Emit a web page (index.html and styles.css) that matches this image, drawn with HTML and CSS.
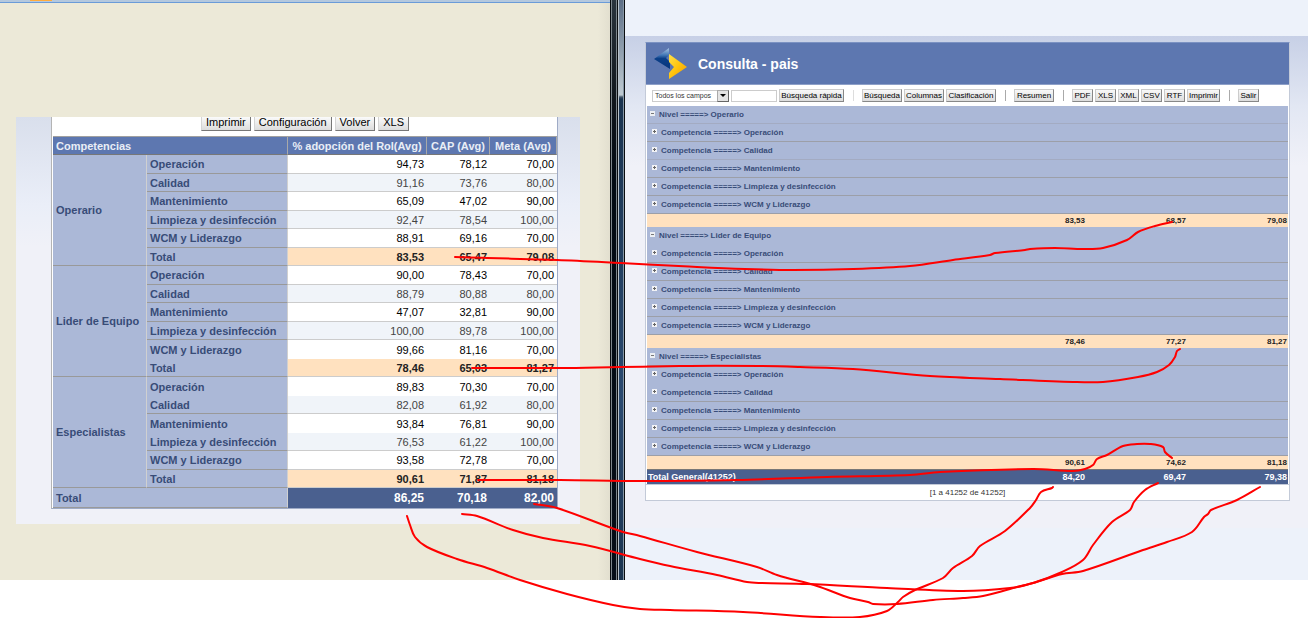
FILE: index.html
```html
<!DOCTYPE html>
<html lang="es">
<head>
<meta charset="utf-8">
<title>Consulta - pais</title>
<link rel="stylesheet" href="styles.css">
</head>
<body>
<main class="compare">
  <section class="pane pane-left">
    <div class="tabstrip"><span class="tab-mark"></span></div>
    <div class="summary-wrap">
      <div class="summary">
        <div class="summary-actions">
          <button class="btn" type="button">Imprimir</button>
          <button class="btn" type="button">Configuración</button>
          <button class="btn" type="button">Volver</button>
          <button class="btn" type="button">XLS</button>
        </div>
        <table class="pivot">
          <colgroup><col class="c-level"><col class="c-skill"><col class="c-role"><col class="c-cap"><col class="c-meta"></colgroup>
          <thead>
            <tr><th class="head-first" colspan="2" scope="col">Competencias</th><th scope="col">% adopción del Rol(Avg)</th><th scope="col">CAP (Avg)</th><th scope="col">Meta (Avg)</th></tr>
          </thead>
          <tbody>
            <tr><th class="level" rowspan="6" scope="rowgroup">Operario</th><th scope="row">Operación</th><td>94,73</td><td>78,12</td><td>70,00</td></tr>
            <tr class="alt"><th scope="row">Calidad</th><td>91,16</td><td>73,76</td><td>80,00</td></tr>
            <tr><th scope="row">Mantenimiento</th><td>65,09</td><td>47,02</td><td>90,00</td></tr>
            <tr class="alt"><th scope="row">Limpieza y desinfección</th><td>92,47</td><td>78,54</td><td>100,00</td></tr>
            <tr><th scope="row">WCM y Liderazgo</th><td>88,91</td><td>69,16</td><td>70,00</td></tr>
            <tr class="subtotal"><th scope="row">Total</th><td>83,53</td><td>65,47</td><td>79,08</td></tr>
          </tbody>
          <tbody>
            <tr><th class="level" rowspan="6" scope="rowgroup">Lider de Equipo</th><th scope="row">Operación</th><td>90,00</td><td>78,43</td><td>70,00</td></tr>
            <tr class="alt"><th scope="row">Calidad</th><td>88,79</td><td>80,88</td><td>80,00</td></tr>
            <tr><th scope="row">Mantenimiento</th><td>47,07</td><td>32,81</td><td>90,00</td></tr>
            <tr class="alt"><th scope="row">Limpieza y desinfección</th><td>100,00</td><td>89,78</td><td>100,00</td></tr>
            <tr class="joined"><th scope="row">WCM y Liderazgo</th><td>99,66</td><td>81,16</td><td>70,00</td></tr>
            <tr class="subtotal"><th scope="row">Total</th><td>78,46</td><td>65,03</td><td>81,27</td></tr>
          </tbody>
          <tbody>
            <tr class="joined"><th class="level" rowspan="6" scope="rowgroup">Especialistas</th><th scope="row">Operación</th><td>89,83</td><td>70,30</td><td>70,00</td></tr>
            <tr class="alt"><th scope="row">Calidad</th><td>82,08</td><td>61,92</td><td>80,00</td></tr>
            <tr class="joined"><th scope="row">Mantenimiento</th><td>93,84</td><td>76,81</td><td>90,00</td></tr>
            <tr class="alt"><th scope="row">Limpieza y desinfección</th><td>76,53</td><td>61,22</td><td>100,00</td></tr>
            <tr><th scope="row">WCM y Liderazgo</th><td>93,58</td><td>72,78</td><td>70,00</td></tr>
            <tr class="subtotal"><th scope="row">Total</th><td>90,61</td><td>71,87</td><td>81,18</td></tr>
          </tbody>
          <tfoot>
            <tr><th colspan="2" scope="row">Total</th><td>86,25</td><td>70,18</td><td>82,00</td></tr>
          </tfoot>
        </table>
      </div>
    </div>
  </section>

  <div class="frame-edge"><i class="edge-dark"></i><i class="edge-blue"></i></div>

  <section class="pane pane-right">
    <div class="backdrop">
      <div class="query">
        <header class="query-head">
          <svg class="logo" viewBox="0 0 33 32" aria-hidden="true">
            <defs>
              <linearGradient id="lb" x1="0" y1="0" x2="0" y2="1"><stop offset="0" stop-color="#a9c6e4"/><stop offset=".35" stop-color="#3f74b4"/><stop offset=".5" stop-color="#0b3f88"/><stop offset="1" stop-color="#06357c"/></linearGradient>
              <linearGradient id="ly" x1="0" y1="0" x2="1" y2="1"><stop offset="0" stop-color="#ffe14a"/><stop offset=".5" stop-color="#ffc30c"/><stop offset="1" stop-color="#f29a00"/></linearGradient>
            </defs>
            <path d="M15 0V7L12 10L16 14V21L0 11Z" fill="url(#lb)"/>
            <path d="M15 6L33 19L15 31V25L20 19L15 14Z" fill="url(#ly)"/>
          </svg>
          <h1>Consulta - pais</h1>
        </header>
        <div class="toolbar">
          <label class="picker"><select aria-label="Campo"><option>Todos los campos</option></select><span class="picker-arrow"></span></label>
          <input class="quick" type="text" aria-label="Búsqueda rápida">
          <button class="tool w-quick" type="button">Búsqueda rápida</button>
          <span class="sep sep-light"></span>
          <button class="tool w-med" type="button">Búsqueda</button>
          <button class="tool w-med" type="button">Columnas</button>
          <button class="tool w-wide" type="button">Clasificación</button>
          <span class="sep"></span>
          <button class="tool w-med" type="button">Resumen</button>
          <span class="sep"></span>
          <button class="tool w-tiny" type="button">PDF</button>
          <button class="tool w-tiny" type="button">XLS</button>
          <button class="tool w-tiny" type="button">XML</button>
          <button class="tool w-tiny" type="button">CSV</button>
          <button class="tool w-tiny" type="button">RTF</button>
          <button class="tool w-print" type="button">Imprimir</button>
          <span class="sep"></span>
          <button class="tool w-tiny" type="button">Salir</button>
        </div>
        <table class="groups">
          <colgroup><col><col class="g-wide"><col class="g-wide"></colgroup>
          <tbody>
            <tr class="soft"><th colspan="3" scope="rowgroup"><button class="fold minus" type="button" aria-label="Contraer"></button>Nivel =====&gt; Operario</th></tr>
            <tr class="sub"><th colspan="3"><button class="fold plus" type="button" aria-label="Expandir"></button>Competencia =====&gt; Operación</th></tr>
            <tr class="sub soft"><th colspan="3"><button class="fold plus" type="button" aria-label="Expandir"></button>Competencia =====&gt; Calidad</th></tr>
            <tr class="sub"><th colspan="3"><button class="fold plus" type="button" aria-label="Expandir"></button>Competencia =====&gt; Mantenimiento</th></tr>
            <tr class="sub"><th colspan="3"><button class="fold plus" type="button" aria-label="Expandir"></button>Competencia =====&gt; Limpieza y desinfección</th></tr>
            <tr class="sub"><th colspan="3"><button class="fold plus" type="button" aria-label="Expandir"></button>Competencia =====&gt; WCM y Liderazgo</th></tr>
            <tr class="sum"><td>83,53</td><td>68,57</td><td>79,08</td></tr>
          </tbody>
          <tbody>
            <tr class="none"><th colspan="3" scope="rowgroup"><button class="fold minus" type="button" aria-label="Contraer"></button>Nivel =====&gt; Lider de Equipo</th></tr>
            <tr class="sub"><th colspan="3"><button class="fold plus" type="button" aria-label="Expandir"></button>Competencia =====&gt; Operación</th></tr>
            <tr class="sub"><th colspan="3"><button class="fold plus" type="button" aria-label="Expandir"></button>Competencia =====&gt; Calidad</th></tr>
            <tr class="sub"><th colspan="3"><button class="fold plus" type="button" aria-label="Expandir"></button>Competencia =====&gt; Mantenimiento</th></tr>
            <tr class="sub"><th colspan="3"><button class="fold plus" type="button" aria-label="Expandir"></button>Competencia =====&gt; Limpieza y desinfección</th></tr>
            <tr class="sub"><th colspan="3"><button class="fold plus" type="button" aria-label="Expandir"></button>Competencia =====&gt; WCM y Liderazgo</th></tr>
            <tr class="sum"><td>78,46</td><td>77,27</td><td>81,27</td></tr>
          </tbody>
          <tbody>
            <tr><th colspan="3" scope="rowgroup"><button class="fold minus" type="button" aria-label="Contraer"></button>Nivel =====&gt; Especialistas</th></tr>
            <tr class="sub none"><th colspan="3"><button class="fold plus" type="button" aria-label="Expandir"></button>Competencia =====&gt; Operación</th></tr>
            <tr class="sub"><th colspan="3"><button class="fold plus" type="button" aria-label="Expandir"></button>Competencia =====&gt; Calidad</th></tr>
            <tr class="sub"><th colspan="3"><button class="fold plus" type="button" aria-label="Expandir"></button>Competencia =====&gt; Mantenimiento</th></tr>
            <tr class="sub"><th colspan="3"><button class="fold plus" type="button" aria-label="Expandir"></button>Competencia =====&gt; Limpieza y desinfección</th></tr>
            <tr class="sub"><th colspan="3"><button class="fold plus" type="button" aria-label="Expandir"></button>Competencia =====&gt; WCM y Liderazgo</th></tr>
            <tr class="sum"><td>90,61</td><td>74,62</td><td>81,18</td></tr>
          </tbody>
          <tfoot>
            <tr><td><span class="grand"><b>Total General(41252)</b><span>84,20</span></span></td><td>69,47</td><td>79,38</td></tr>
          </tfoot>
        </table>
        <footer class="pager">[1 a 41252 de 41252]</footer>
      </div>
    </div>
  </section>

  <svg class="marks" viewBox="0 0 1308 618" aria-hidden="true"></svg>
</main>
<script src="marks.js"></script>
</body>
</html>
```

FILE: styles.css
```css
* { box-sizing: border-box; }

body {
  margin: 0;
  background: #fff;
  font-family: "Liberation Sans", Arial, sans-serif;
}

.compare {
  position: relative;
  display: grid;
  grid-template-columns: 610fr 15px 683fr;
  padding-bottom: 38px;
}

.pane { min-height: 580px; min-width: 0; }

.marks {
  position: absolute;
  top: 0;
  left: 0;
  width: 100%;
  pointer-events: none;
}

.marks path {
  fill: none;
  stroke: #f00;
  stroke-width: 2;
  stroke-linecap: round;
  stroke-linejoin: round;
}

/* Left window */

.pane-left { background: linear-gradient(to right, #ece9d8 98%, #e2dfcf); }

.tabstrip {
  height: 3px;
  background: #b4c8de;
  border-bottom: 1px solid #6a9bd8;
}

.tab-mark {
  display: block;
  width: 22px;
  height: 1px;
  margin-left: 30px;
  background: #ffab3c;
}

.summary-wrap {
  margin: 114px 30px 0 16px;
  padding: 0 22px 15px 35px;
  background: linear-gradient(#d9dfec, #eaeef8 88px, #f0f1f8 130px);
}

.summary {
  padding-left: 1px;
  background: #fff;
  border-left: 1px solid #b4b4b4;
  border-right: 1px solid #9fabc6;
  border-bottom: 1px solid #9fabc6;
}

.summary-actions {
  display: flex;
  justify-content: center;
  gap: 3px;
  height: 19px;
  align-items: flex-start;
}

.btn {
  height: 14px;
  padding: 0 4px 3px;
  border: 1px solid #d4d4d4;
  border-top: 0;
  border-right: 1px solid #777;
  border-bottom: 1px solid #777;
  background: linear-gradient(#fafafa, #dcdcdc);
  color: #000;
  font: 11px/10px "Liberation Sans", Arial, sans-serif;
}

.pivot {
  width: 100%;
  border-collapse: separate;
  border-spacing: 0;
  table-layout: fixed;
  border-top: 1px solid #a0a0a0;
}

.c-level { width: 94px; }
.c-skill { width: 141px; }
.c-cap { width: 63px; }
.c-meta { width: 67px; }

.pivot th,
.pivot td {
  height: 18px;
  padding: 0 3px;
  font-size: 11px;
  line-height: 16px;
  white-space: nowrap;
  overflow: hidden;
}

.pivot tbody tr:nth-child(odd) th,
.pivot tbody tr:nth-child(odd) td { height: 19px; }

.pivot thead th {
  background: #5d77b0;
  color: #e9eef6;
  text-align: center;
  border-right: 1px solid #a9a9a9;
  border-bottom: 1px solid #777;
}

.pivot thead .head-first { text-align: left; }

.pivot tbody th,
.pivot tfoot th {
  background: #abb8d7;
  color: #384c77;
  text-align: left;
  border-right: 1px solid #d0d0d0;
  border-bottom: 1px solid #999;
}

.pivot td {
  background: #fff;
  color: #000;
  text-align: right;
  border-bottom: 1px solid #ccc;
}

.pivot .alt td { background: #f0f4f9; color: #444; }
.pivot .subtotal td { background: #ffe1bf; color: #222; font-weight: bold; }
.pivot .joined th:not(.level),
.pivot .joined td { border-bottom: 0; }

.pivot tfoot th { height: 20px; }
.pivot tfoot td {
  height: 20px;
  background: #4a608f;
  border-bottom-color: #4a608f;
  color: #fff;
  font-size: 12px;
  font-weight: bold;
}

/* Window border between the panes */

.frame-edge {
  display: grid;
  grid-template-columns: 4px 5px;
  padding: 0 2px 0 2px;
  column-gap: 3px;
  background: linear-gradient(to right, #0a0d10 1px, #7d868c 1px 2px, #0a0d10 2px 6px, #7d868c 6px 7px, #0a0d10 7px 8px, #b8c2ca 8px 9px, #244263 9px 13px, #8797a5 13px 14px, #0a0d10 14px);
}

.edge-dark { background: linear-gradient(#2a343d, #10161c 100px, #020a12 180px, #050d17); }
.edge-blue { width: 4px; background: linear-gradient(#5d6f86, #bfcad2 95px, #44576a 97px, #1b3450 99px, #2b4a70 400px, #1b3450); }

/* Right window */

.pane-right { padding-top: 36px; background: #edf2fa; }

.backdrop {
  padding: 6px 18px 27px 20px;
  background: linear-gradient(#c7d0e6, #e2e7f3 70px, #f0f1f8 130px);
}

.query {
  border: 1px solid #c3cad8;
  border-top-color: #7b92c2;
  background: #fff;
}

.query-head {
  display: flex;
  align-items: center;
  gap: 11px;
  height: 42px;
  padding-left: 8px;
  background: #5d77b0;
  border-bottom: 1px solid #8ea0c8;
}

.logo { width: 33px; height: 32px; }

.query-head h1 {
  margin: 0;
  color: #fff;
  font-size: 14px;
  line-height: 16px;
}

.toolbar {
  display: flex;
  align-items: center;
  gap: 2px;
  height: 21px;
  padding-left: 6px;
}

.picker { position: relative; width: 77px; height: 12px; }

.picker select {
  display: block;
  width: 100%;
  height: 12px;
  padding: 0 2px;
  appearance: none;
  border: 1px solid #ccc;
  border-radius: 0;
  background: #fff;
  color: #333;
  font: 7px/10px "Liberation Sans", Arial, sans-serif;
}

.picker-arrow {
  position: absolute;
  top: 0;
  right: 0;
  display: flex;
  align-items: center;
  justify-content: center;
  width: 12px;
  height: 12px;
  border: 1px solid #aaa;
  border-right-color: #666;
  border-bottom-color: #666;
  background: #e4e4e4;
  pointer-events: none;
}

.picker-arrow::after {
  content: "";
  border: 3px solid transparent;
  border-top-color: #000;
  border-bottom: 0;
}

.quick {
  width: 46px;
  height: 12px;
  padding: 0 2px;
  border: 1px solid #ccc;
  font-size: 8px;
}

.tool {
  height: 13px;
  padding: 0;
  border: 1px solid #ccc;
  border-right-color: #888;
  border-bottom-color: #888;
  background: linear-gradient(#f8f8f8, #dcdcdc);
  color: #000;
  font: 8px/10px "Liberation Sans", Arial, sans-serif;
  white-space: nowrap;
}

.w-quick { width: 65px; }
.w-med { width: 40px; }
.w-wide { width: 50px; }
.w-tiny { width: 21px; }
.w-print { width: 33px; }

.sep { width: 1px; height: 11px; margin: 0 6px 0 7px; background: #aaa; }
.sep-light { background: #ddd; }

.groups {
  width: 100%;
  border-collapse: separate;
  border-spacing: 0;
  padding: 0 1px;
  background: #fff;
}

.g-wide { width: 101px; }

.groups th {
  height: 18px;
  padding: 0 0 0 3px;
  background: #abb8d7;
  border-bottom: 1px solid #9c9fa8;
  color: #384c77;
  font-size: 8px;
  line-height: 12px;
  text-align: left;
}

.groups .sub th { padding-left: 5px; }
.groups .soft th { border-bottom-color: #a3abc2; }
.groups .none th { border-bottom-color: #abb8d7; }

.groups td {
  height: 13px;
  padding: 0 1px;
  background: #ffe1bf;
  color: #222;
  font-size: 8px;
  font-weight: bold;
  line-height: 11px;
  text-align: right;
}

.groups tfoot td {
  height: 15px;
  background: #4a608f;
  border-top: 1px solid #777;
  color: #fff;
  font-size: 9px;
}

.grand { display: flex; justify-content: space-between; }

.fold {
  display: inline-block;
  width: 5px;
  height: 5px;
  margin: 0 4px 2px 0;
  padding: 0;
  border: 0;
  vertical-align: middle;
  background: linear-gradient(#777, #777) center / 3px 1px no-repeat, #eceff4;
}

.plus {
  background: linear-gradient(#666, #666) center / 3px 1px no-repeat, linear-gradient(#666, #666) center / 1px 3px no-repeat, #f2f3f6;
}

.pager {
  height: 16px;
  border-top: 1px solid #c3cad8;
  color: #333;
  font-size: 8px;
  line-height: 16px;
  text-align: center;
}
```

FILE: marks.js
```js
// Freehand strokes linking the totals of both tables.
const strokes = [
  [[455,257],[487,258],[557,260],[620,263],[697,267],[745,269],[793,270],[853,269],[910,266],[953,260],[990,255],[995,253],[1025,250],[1030,249],[1055,248],[1083,249],[1103,248],[1127,240],[1138,232],[1155,226],[1172,222]],
  [[472,368],[560,368],[620,367],[690,366],[760,366],[800,367],[853,369],[930,376],[1000,379],[1073,382],[1103,382],[1138,377],[1157,372],[1169,365],[1175,357],[1177,351],[1180,349]],
  [[478,480],[560,480],[640,481],[737,480],[827,477],[910,475],[940,472],[1033,469],[1073,471],[1085,469],[1093,465],[1097,459],[1107,455],[1123,446],[1137,444],[1150,444],[1163,447],[1165,452],[1172,458]],
  [[534,504],[557,508],[620,531],[640,536],[697,552],[757,567],[777,575],[817,586],[850,598],[868,602],[873,604],[897,604],[933,600],[963,598],[983,596],[1010,589],[1033,583],[1062,574],[1083,571],[1143,550],[1167,542],[1192,532],[1204,517],[1208,514],[1211,510],[1237,500],[1260,487]],
  [[462,514],[477,516],[513,530],[543,538],[590,546],[640,559],[670,566],[717,575],[747,582],[760,583],[807,584],[887,588],[963,591],[1010,588],[1033,583],[1062,572],[1083,560],[1093,545],[1112,522],[1130,510],[1134,502],[1145,490],[1158,483]],
  [[407,516],[410,525],[415,537],[427,547],[457,559],[487,568],[520,580],[567,594],[613,605],[640,609],[670,610],[743,612],[820,617],[860,617],[887,611],[898,602],[903,597],[915,590],[943,578],[953,568],[972,556],[980,546],[1005,531],[1030,508],[1036,500],[1041,492],[1052,488],[1053,487]]
];

const svg = document.querySelector(".marks");

function smooth(points) {
  let d = "M" + points[0].join(" ");
  for (let i = 0; i < points.length - 1; i++) {
    const a = points[i - 1] || points[i];
    const b = points[i];
    const c = points[i + 1];
    const e = points[i + 2] || c;
    const t = Math.hypot(c[0] - b[0], c[1] - b[1]) / 3;
    const u = Math.hypot(c[0] - a[0], c[1] - a[1]) || 1;
    const v = Math.hypot(e[0] - b[0], e[1] - b[1]) || 1;
    d += ` C${b[0] + (c[0] - a[0]) / u * t} ${b[1] + (c[1] - a[1]) / u * t} ${c[0] - (e[0] - b[0]) / v * t} ${c[1] - (e[1] - b[1]) / v * t} ${c[0]} ${c[1]}`;
  }
  return d;
}

for (const points of strokes) {
  const path = document.createElementNS("http://www.w3.org/2000/svg", "path");
  path.setAttribute("d", smooth(points));
  svg.append(path);
}
```
